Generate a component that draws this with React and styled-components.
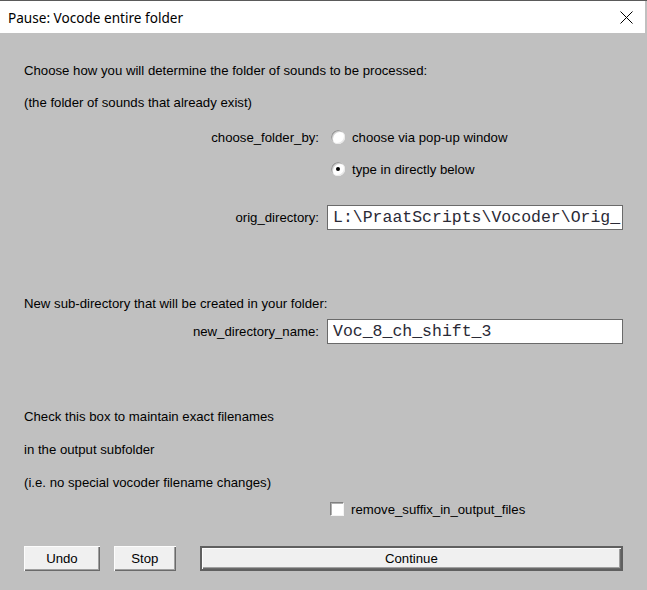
import React from "react";
import styled, { createGlobalStyle } from "styled-components";

const GlobalStyle = createGlobalStyle`
  html, body {
    margin: 0;
    padding: 0;
    background: #c0c0c0;
  }
  * {
    box-sizing: border-box;
  }
`;

const Window = styled.div`
  width: 647px;
  height: 590px;
  display: flex;
  flex-direction: column;
  background: #c0c0c0;
  border-top: 1px solid #5a5a5a;
  font-family: "Liberation Sans", Arial, sans-serif;
  font-size: 13.2px;
  color: #000;
  overflow: hidden;
`;

const TitleBar = styled.div`
  height: 32px;
  flex-shrink: 0;
  display: flex;
  align-items: center;
  justify-content: space-between;
  background: #fff;
  padding: 0 0 0 8px;
  margin-right: 2px;
`;

const Title = styled.span`
  font-family: "Noto Sans", "Open Sans", sans-serif;
  font-size: 13.6px;
  color: #000;
`;

const CloseButton = styled.div`
  width: 46px;
  height: 32px;
  display: flex;
  align-items: center;
  justify-content: center;
  margin-right: -4px;
`;

const Body = styled.div`
  display: flex;
  flex-direction: column;
  padding: 21px 24px 0 24px;
`;

const Row = styled.div`
  display: flex;
  align-items: center;
  height: ${(p) => p.$h || 32}px;
  margin-top: ${(p) => p.$mt || 0}px;
  white-space: nowrap;
`;

const Label = styled.div`
  width: 295px;
  text-align: right;
  flex-shrink: 0;
  margin-right: 8px;
`;

const Field = styled.div`
  display: flex;
  align-items: center;
  flex: 1;
`;

const Choice = styled.label`
  display: flex;
  align-items: center;
  gap: 7px;
  padding-left: ${(p) => p.$pl || 4}px;
`;

const Radio = styled.span`
  width: 14px;
  height: 14px;
  border-radius: 50%;
  background: #fff;
  box-shadow: inset 1px 1px 0 #9a9a9a, inset 2px 2px 0 #d4d4d4,
    inset -1px -1px 0 #e8e8e8;
  display: flex;
  align-items: center;
  justify-content: center;
  &::after {
    content: "";
    width: 4px;
    height: 4px;
    border-radius: 50%;
    background: ${(p) => (p.$checked ? "#000" : "transparent")};
  }
`;

const Check = styled.span`
  width: 14px;
  height: 14px;
  background: #fff;
  border: 1px solid;
  border-color: #808080 #f4f4f4 #f4f4f4 #808080;
  box-shadow: inset 1px 1px 0 #b0b0b0;
`;

const TextBox = styled.input`
  width: 296px;
  height: 25px;
  border: 1px solid #6a6a6a;
  background: #fff;
  padding: 0 0 0 5px;
  font-family: "Liberation Mono", "Courier New", monospace;
  font-size: 16.5px;
  color: #2a2a36;
  outline: none;
`;

const ButtonBar = styled.div`
  display: flex;
  align-items: center;
  padding: 0 24px;
  margin-top: 26px;
`;

const Button = styled.button`
  width: ${(p) => p.$w}px;
  height: 25px;
  margin-right: ${(p) => p.$mr || 0}px;
  background: #f0f0f0;
  font-family: "Liberation Sans", Arial, sans-serif;
  font-size: 13.2px;
  color: #000;
  padding: 0;
  border: ${(p) => (p.$default ? "2px solid #5f5f5f" : "none")};
  box-shadow: inset 1px 1px 0 #fcfcfc, inset -1px -1px 0 #6a6a6a,
    inset -2px -2px 0 #a0a0a0;
`;

export default function App() {
  return (
    <>
      <GlobalStyle />
      <Window>
        <TitleBar>
          <Title>Pause: Vocode entire folder</Title>
          <CloseButton>
            <svg width="13" height="13" viewBox="0 0 13 13">
              <path d="M0.5 0.5 L12.5 12.5 M12.5 0.5 L0.5 12.5" stroke="#000" strokeWidth="1" />
            </svg>
          </CloseButton>
        </TitleBar>
        <Body>
          <Row>Choose how you will determine the folder of sounds to be processed:</Row>
          <Row>(the folder of sounds that already exist)</Row>
          <Row $mt={3}>
            <Label>choose_folder_by:</Label>
            <Field>
              <Choice>
                <Radio />
                choose via pop-up window
              </Choice>
            </Field>
          </Row>
          <Row>
            <Label />
            <Field>
              <Choice>
                <Radio $checked />
                type in directly below
              </Choice>
            </Field>
          </Row>
          <Row $mt={16}>
            <Label>orig_directory:</Label>
            <Field>
              <TextBox readOnly value={"L:\\PraatScripts\\Vocoder\\Orig_"} />
            </Field>
          </Row>
          <Row $mt={56} $h={28}>New sub-directory that will be created in your folder:</Row>
          <Row $h={28}>
            <Label>new_directory_name:</Label>
            <Field>
              <TextBox readOnly value="Voc_8_ch_shift_3" />
            </Field>
          </Row>
          <Row $mt={55}>Check this box to maintain exact filenames</Row>
          <Row $mt={1}>in the output subfolder</Row>
          <Row $mt={1}>(i.e. no special vocoder filename changes)</Row>
          <Row $h={22}>
            <Label />
            <Field>
              <Choice $pl={3}>
                <Check />
                remove_suffix_in_output_files
              </Choice>
            </Field>
          </Row>
        </Body>
        <ButtonBar>
          <Button $w={76} $mr={14}>Undo</Button>
          <Button $w={62} $mr={24}>Stop</Button>
          <Button $w={424} $default>Continue</Button>
        </ButtonBar>
      </Window>
    </>
  );
}
